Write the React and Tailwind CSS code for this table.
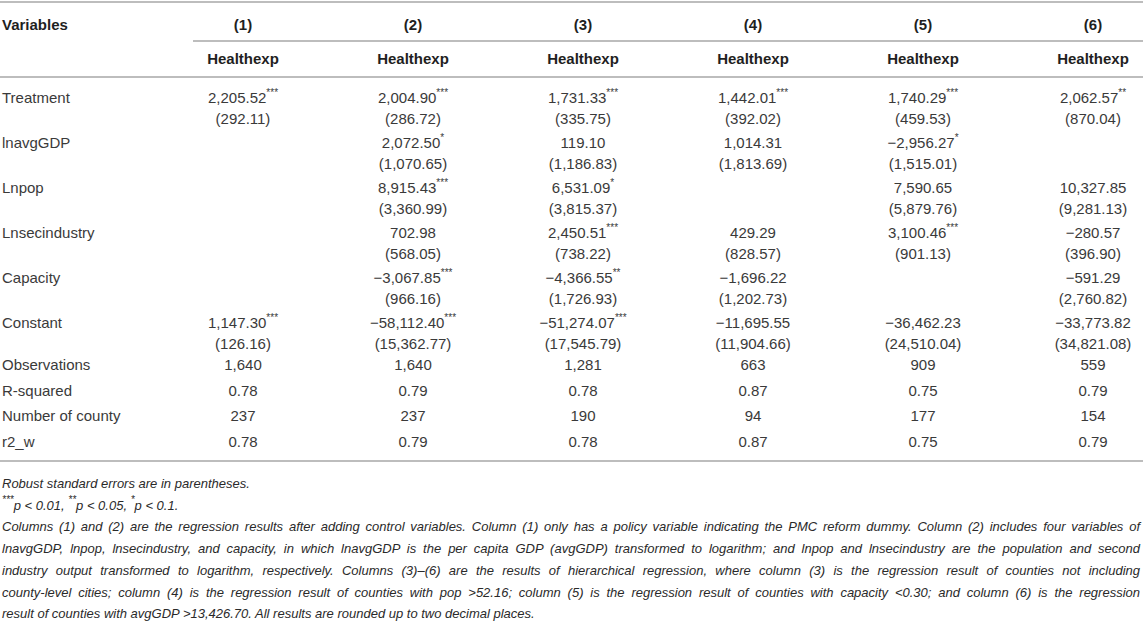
import React from 'react';

const twoLine = [
  {
    label: 'Treatment',
    vals: [
      ['2,205.52', '***', '(292.11)'],
      ['2,004.90', '***', '(286.72)'],
      ['1,731.33', '***', '(335.75)'],
      ['1,442.01', '***', '(392.02)'],
      ['1,740.29', '***', '(459.53)'],
      ['2,062.57', '**', '(870.04)'],
    ],
  },
  {
    label: 'lnavgGDP',
    vals: [
      null,
      ['2,072.50', '*', '(1,070.65)'],
      ['119.10', '', '(1,186.83)'],
      ['1,014.31', '', '(1,813.69)'],
      ['\u22122,956.27', '*', '(1,515.01)'],
      null,
    ],
  },
  {
    label: 'Lnpop',
    vals: [
      null,
      ['8,915.43', '***', '(3,360.99)'],
      ['6,531.09', '*', '(3,815.37)'],
      null,
      ['7,590.65', '', '(5,879.76)'],
      ['10,327.85', '', '(9,281.13)'],
    ],
  },
  {
    label: 'Lnsecindustry',
    vals: [
      null,
      ['702.98', '', '(568.05)'],
      ['2,450.51', '***', '(738.22)'],
      ['429.29', '', '(828.57)'],
      ['3,100.46', '***', '(901.13)'],
      ['\u2212280.57', '', '(396.90)'],
    ],
  },
  {
    label: 'Capacity',
    vals: [
      null,
      ['\u22123,067.85', '***', '(966.16)'],
      ['\u22124,366.55', '**', '(1,726.93)'],
      ['\u22121,696.22', '', '(1,202.73)'],
      null,
      ['\u2212591.29', '', '(2,760.82)'],
    ],
  },
  {
    label: 'Constant',
    last: true,
    vals: [
      ['1,147.30', '***', '(126.16)'],
      ['\u221258,112.40', '***', '(15,362.77)'],
      ['\u221251,274.07', '***', '(17,545.79)'],
      ['\u221211,695.55', '', '(11,904.66)'],
      ['\u221236,462.23', '', '(24,510.04)'],
      ['\u221233,773.82', '', '(34,821.08)'],
    ],
  },
];

const oneLine = [
  { label: 'Observations', vals: ['1,640', '1,640', '1,281', '663', '909', '559'] },
  { label: 'R-squared', vals: ['0.78', '0.79', '0.78', '0.87', '0.75', '0.79'] },
  { label: 'Number of county', vals: ['237', '237', '190', '94', '177', '154'] },
  { label: 'r2_w', vals: ['0.78', '0.79', '0.78', '0.87', '0.75', '0.79'] },
];

const paragraph = [
  'Columns (1) and (2) are the regression results after adding control variables. Column (1) only has a policy variable indicating the PMC reform dummy. Column (2) includes four variables of',
  'lnavgGDP, lnpop, lnsecindustry, and capacity, in which lnavgGDP is the per capita GDP (avgGDP) transformed to logarithm; and lnpop and lnsecindustry are the population and second',
  'industry output transformed to logarithm, respectively. Columns (3)\u2013(6) are the results of hierarchical regression, where column (3) is the regression result of counties not including',
  'county-level cities; column (4) is the regression result of counties with pop >52.16; column (5) is the regression result of counties with capacity <0.30; and column (6) is the regression',
];

const grid = 'grid grid-cols-[123px_repeat(6,100px)] gap-x-[70px]';
const Rule = ({ className = '' }) => <div className={`h-[2px] bg-[#bdbdbd] ${className}`} />;

const Stars = ({ s }) =>
  s ? <sup className="text-[10px] relative -top-[1px] align-super leading-none">{s}</sup> : null;

export default function App() {
  return (
    <div
      className="w-[1143px] h-[638px] bg-white text-[#3a3a3a] overflow-hidden"
      style={{ fontFamily: '"Liberation Sans", Arial, sans-serif' }}
    >
      <Rule className="mt-[1px]" />

      {/* header */}
      <div className={`${grid} text-[15px] font-bold text-[#1f1f1f] leading-[21px] pt-[11px] pb-[5px]`}>
        <div className="pl-[2px]">Variables</div>
        {[1, 2, 3, 4, 5, 6].map((n) => (
          <div key={n} className="text-center">({n})</div>
        ))}
      </div>
      <div className={grid}>
        <div />
        <Rule className="col-span-6" />
      </div>
      <div className={`${grid} text-[15px] font-bold text-[#1f1f1f] leading-[21px] pt-[6px] pb-[7px]`}>
        <div />
        {[1, 2, 3, 4, 5, 6].map((n) => (
          <div key={n} className="text-center whitespace-nowrap">Healthexp</div>
        ))}
      </div>
      <Rule />

      {/* body */}
      <div className="pt-[9px] text-[15px] leading-[21px]">
        {twoLine.map((r) => (
          <div key={r.label} className={`${grid} ${r.last ? 'h-[42px]' : 'h-[45px]'}`}>
            <div className="pl-[2px] whitespace-nowrap">{r.label}</div>
            {r.vals.map((v, i) => (
              <div key={i} className="text-center whitespace-nowrap">
                {v && (
                  <>
                    <div>
                      {v[0]}
                      <Stars s={v[1]} />
                    </div>
                    <div>{v[2]}</div>
                  </>
                )}
              </div>
            ))}
          </div>
        ))}
        {oneLine.map((r) => (
          <div key={r.label} className={`${grid} h-[25.5px]`}>
            <div className="pl-[2px] whitespace-nowrap">{r.label}</div>
            {r.vals.map((v, i) => (
              <div key={i} className="text-center">{v}</div>
            ))}
          </div>
        ))}
      </div>

      <Rule className="mt-[4px]" />

      {/* notes */}
      <div className="pt-[11px] pl-[2px] pr-[3px] text-[13px] italic leading-[21.7px] text-[#2a2a2a]">
        <div>Robust standard errors are in parentheses.</div>
        <div>
          <Stars s="***" />p &lt; 0.01, <Stars s="**" />p &lt; 0.05, <Stars s="*" />p &lt; 0.1.
        </div>
        {paragraph.map((l, i) => (
          <div key={i} className="text-justify [text-align-last:justify] whitespace-nowrap">{l}</div>
        ))}
        <div>result of counties with avgGDP &gt;13,426.70. All results are rounded up to two decimal places.</div>
      </div>
    </div>
  );
}
